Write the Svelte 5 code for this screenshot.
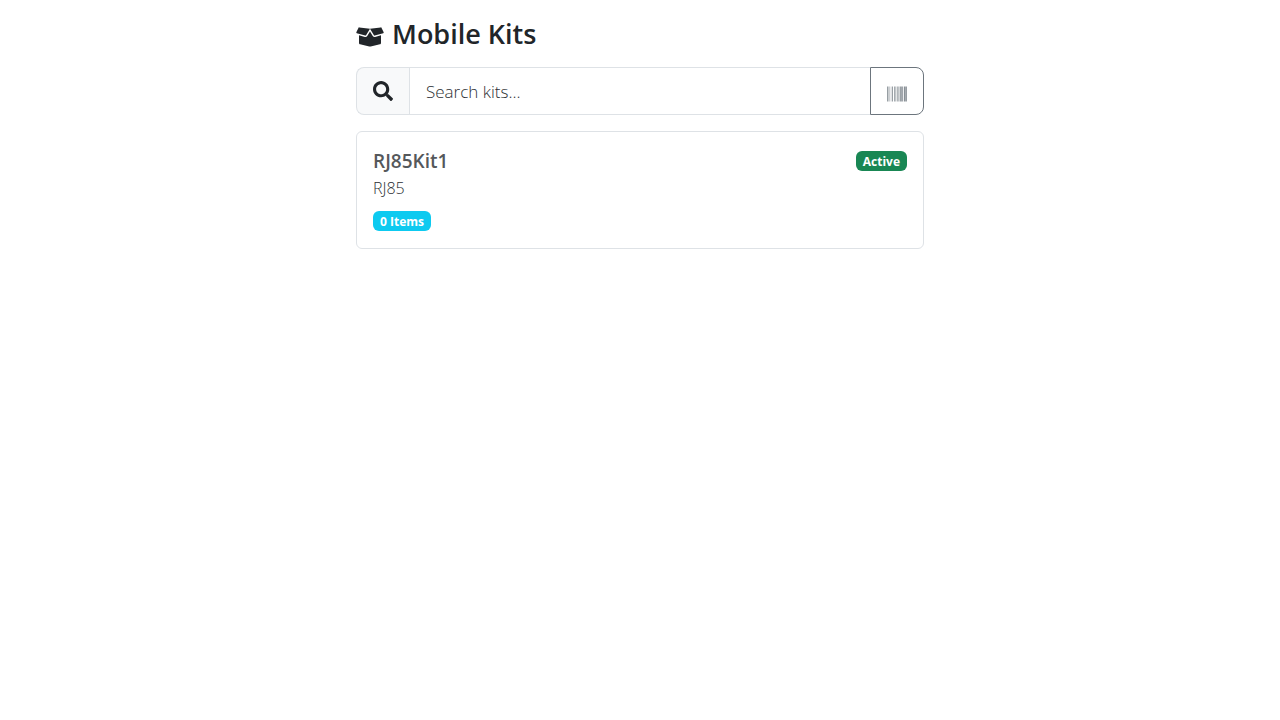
<script>
  let query = $state('');
  const kits = [{ name: 'RJ85Kit1', code: 'RJ85', status: 'Active', items: 0 }];
  const shown = $derived(kits.filter((k) => k.name.toLowerCase().includes(query.toLowerCase())));
</script>

<main>
  <h1>
    <svg class="box" viewBox="0 0 640 512" aria-hidden="true"><path d="M425.7 256c-16.9 0-32.8-9-41.4-23.4L320 126l-64.2 106.6c-8.7 14.5-24.6 23.5-41.5 23.5-4.5 0-9-.6-13.3-1.9L64 215v178c0 14.7 10 27.5 24.2 31l216.2 54.1c10.2 2.5 20.9 2.5 31 0L551.8 424c14.2-3.6 24.2-16.4 24.2-31V215l-137 39.1c-4.3 1.3-8.8 1.9-13.3 1.9zm212.6-112.2L586.8 41c-3.1-6.2-9.8-9.8-16.7-8.9L320 64l91.7 152.1c3.8 6.3 11.4 9.3 18.5 7.3l197.9-56.5c9.9-2.9 14.7-13.9 10.2-23.1zM53.2 41L1.7 143.8c-4.6 9.2.3 20.2 10.1 23l197.9 56.5c7.1 2 14.7-1 18.5-7.3L320 64 69.8 32.1c-6.9-.8-13.5 2.7-16.6 8.9z" /></svg>
    <span>Mobile Kits</span>
  </h1>

  <div class="search">
    <label for="kit-search" aria-label="Search kits">
      <svg viewBox="0 0 512 512" aria-hidden="true"><path d="M505 442.7L405.3 343c-4.5-4.5-10.6-7-17-7H372c27.6-35.3 44-79.7 44-128C416 93.1 322.9 0 208 0S0 93.1 0 208s93.1 208 208 208c48.3 0 92.7-16.4 128-44v16.3c0 6.4 2.5 12.5 7 17l99.7 99.7c9.4 9.4 24.6 9.4 33.9 0l28.3-28.3c9.4-9.4 9.4-24.6.1-34zM208 336c-70.7 0-128-57.2-128-128 0-70.7 57.2-128 128-128 70.7 0 128 57.2 128 128 0 70.7-57.2 128-128 128z" /></svg>
    </label>
    <input id="kit-search" type="text" placeholder="Search kits..." bind:value={query} />
    <button type="button" aria-label="Scan barcode">
      <svg viewBox="0 0 512 512" aria-hidden="true"><path d="M0 448V64h18v384H0zm26.857-.273V64H36v383.727h-9.143zm27.143 0V64h8.857v383.727H54zm44.857 0V64h8.857v383.727h-8.857zm36 0V64h17.714v383.727h-17.714zm44.857 0V64h8.857v383.727h-8.857zm18 0V64h8.857v383.727h-8.857zm18 0V64h8.857v383.727h-8.857zm35.715 0V64h18v383.727h-18zm44.857 0V64h18v383.727h-18zm35.999 0V64h18.001v383.727h-18.001zm36.001 0V64h18.001v383.727h-18.001zm26.857 0V64h18v383.727h-18zm45.143 0V64h26.857v383.727h-26.857zm35.714 0V64h9.143v383.727H476zm18 .273V64h18v384h-18z" /></svg>
    </button>
  </div>

  {#each shown as kit}
    <a class="card" href="#{kit.name}">
      <div class="top">
        <h2>{kit.name}</h2>
        <span class="badge active">{kit.status}</span>
      </div>
      <p>{kit.code}</p>
      <span class="badge items">{kit.items} Items</span>
    </a>
  {/each}
</main>

<style>
  :global(body) {
    background: #fff;
    color: #212529;
    font-family: 'Segoe UI', 'Open Sans', 'Noto Sans', sans-serif;
  }
  main {
    box-sizing: border-box;
    max-width: 600px;
    margin: 0 auto;
    padding: 16px;
  }
  svg {
    display: block;
    fill: currentColor;
  }
  h1 {
    display: flex;
    align-items: center;
    gap: 8px;
    margin: 0 0 16px;
    font-size: 27px;
    font-weight: 600;
    line-height: 35px;
  }
  .box {
    width: 28px;
    height: 22px;
    margin-top: 7px;
  }
  .search {
    display: flex;
    height: 48px;
    margin-bottom: 16px;
  }
  .search label,
  .search button {
    box-sizing: border-box;
    display: flex;
    align-items: center;
    flex: none;
    padding: 0 16px;
  }
  .search svg {
    width: 20px;
    height: 20px;
  }
  .search label {
    border: 1px solid #dee2e6;
    border-right: 0;
    border-radius: 8px 0 0 8px;
    background: #f8f9fa;
  }
  .search input {
    box-sizing: border-box;
    flex: 1;
    min-width: 0;
    border: 1px solid #dee2e6;
    border-right: 0;
    border-radius: 0;
    padding: 0 16px;
    background: #fff;
    color: #212529;
    font-family: inherit;
    font-size: 17px;
    font-weight: 300;
    outline: none;
  }
  .search input:focus {
    border-color: #86b7fe;
  }
  .search input::placeholder {
    color: #2c3034;
    opacity: 1;
  }
  .search button {
    border: 1px solid #6c757d;
    border-radius: 0 8px 8px 0;
    padding-top: 6px;
    background: #fff;
    color: #6c757d;
    cursor: pointer;
  }
  .card {
    display: block;
    border: 1px solid #dee2e6;
    border-radius: 6px;
    padding: 16px;
    color: #55585b;
    text-decoration: none;
  }
  .top {
    display: flex;
    align-items: center;
    justify-content: space-between;
    margin-bottom: 4px;
  }
  h2 {
    margin: 0;
    font-size: 19px;
    font-weight: 600;
    line-height: 26px;
  }
  p {
    margin: 0 0 12px;
    color: #2c3034;
    font-size: 16px;
    font-weight: 300;
    line-height: 21px;
  }
  .badge {
    display: block;
    width: fit-content;
    border-radius: 6px;
    padding: 1px 7px 0;
    color: #fff;
    font-size: 12px;
    font-weight: 700;
    line-height: 19px;
  }
  .active {
    background: #198754;
  }
  .items {
    margin-bottom: 1px;
    background: #0dcaf0;
  }
</style>
